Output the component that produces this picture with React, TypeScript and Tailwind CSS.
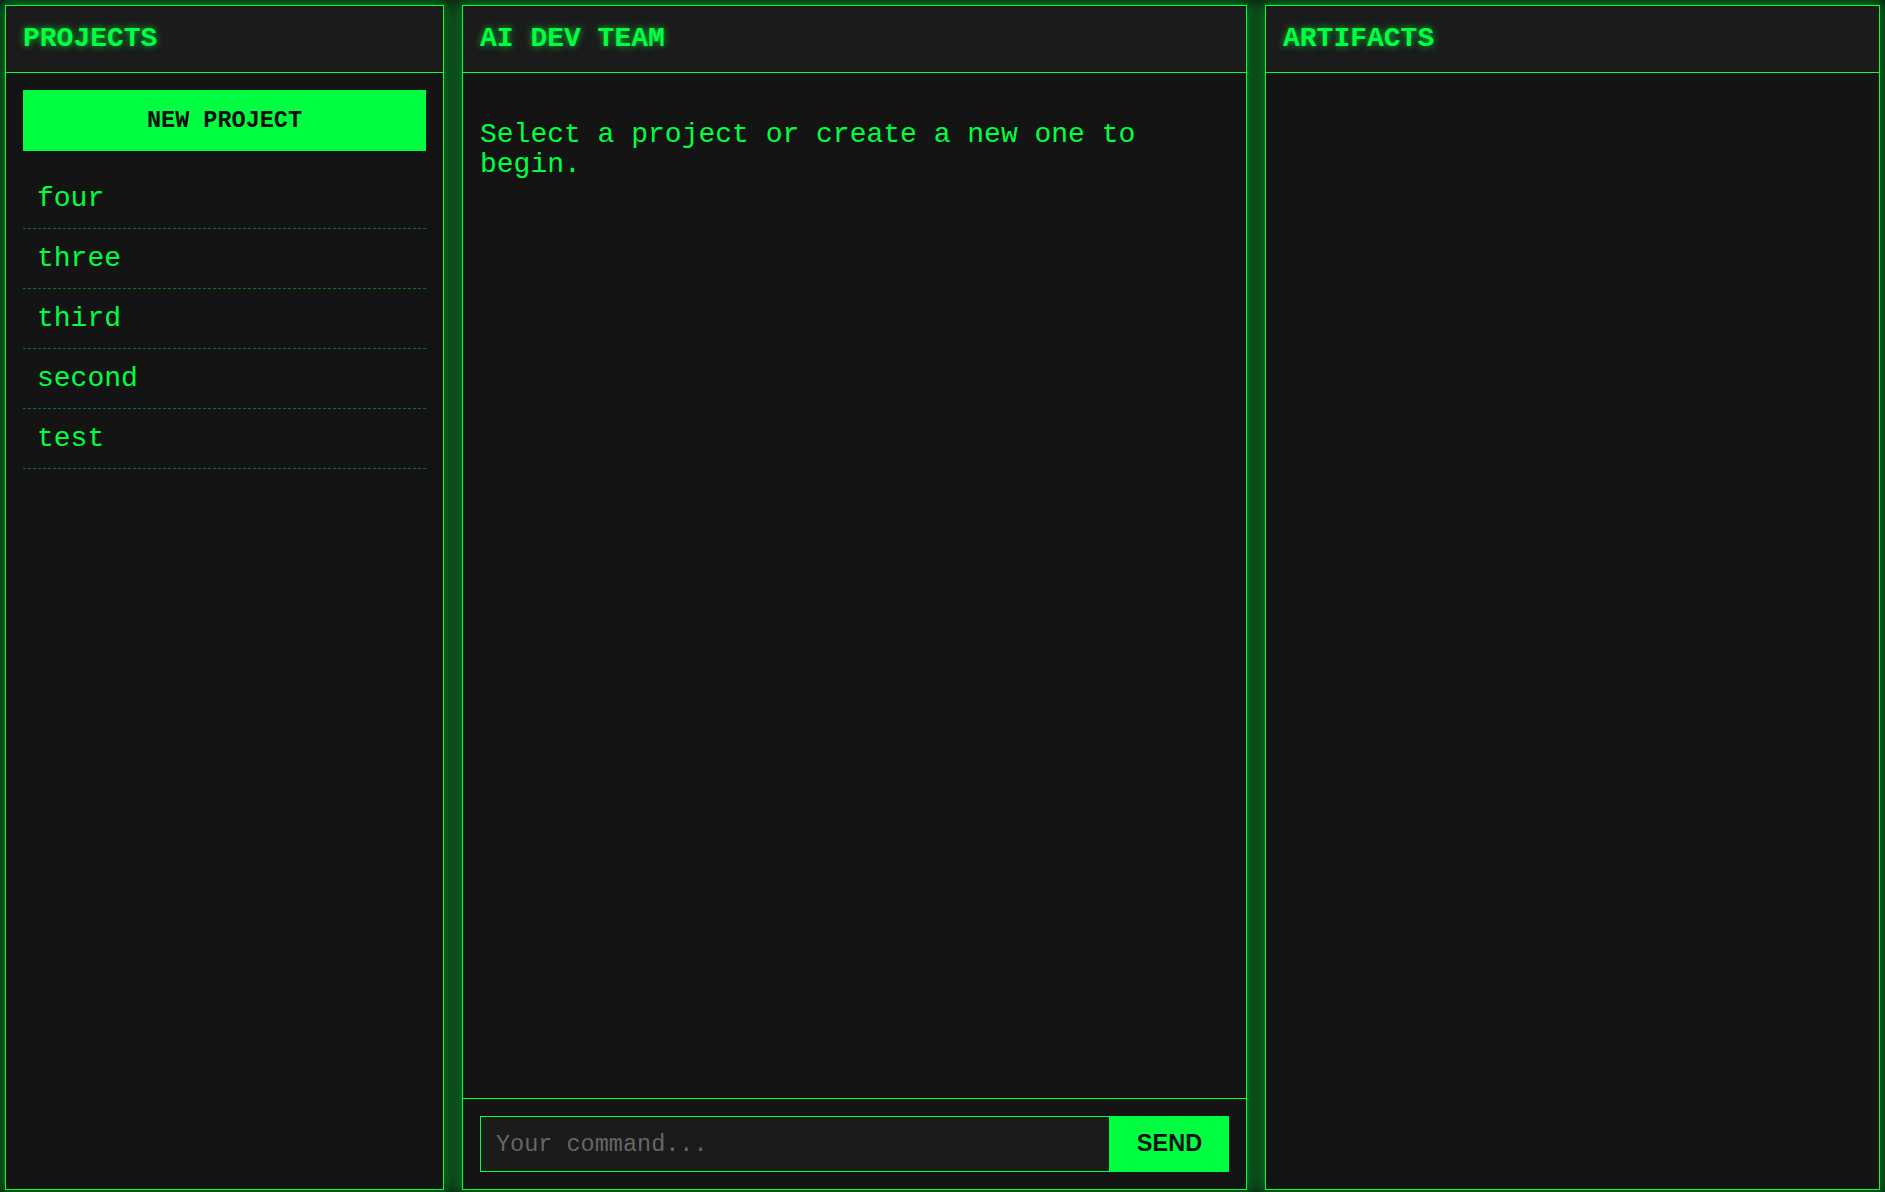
import { useState } from 'react';

const projects = ['four', 'three', 'third', 'second', 'test'];

const panel =
    'flex h-[1185px] flex-col border border-[#00ff41] bg-[#141414] shadow-[0_0_15px_5px_rgba(0,255,65,0.45)]';

function PanelHeader({ title }: { title: string }) {
    return (
        <div className="border-b border-[#00ff41] bg-[#1b1b1b] px-[17px] pt-[17px] pb-[18px]">
            <h2 className="text-[28px] leading-[normal] font-bold text-[#00ff41] [text-shadow:0_0_7px_rgba(0,255,65,0.75)]">
                {title}
            </h2>
        </div>
    );
}

export default function App() {
    const [command, setCommand] = useState('');

    return (
        <div className="grid h-screen grid-cols-[439px_785px_1fr] items-start gap-[18px] bg-[#0d0d0d] px-[5px] pt-[5px] font-['Liberation_Mono',monospace] text-[#00ff41]">
            {/* projects sidebar */}
            <aside className={panel}>
                <PanelHeader title="PROJECTS" />
                <div className="flex flex-col p-[17px]">
                    <button
                        type="button"
                        className="mb-[18px] bg-[#00ff41] py-[17px] text-[23.5px] leading-[normal] font-bold text-[#0d0d0d]"
                    >
                        NEW PROJECT
                    </button>
                    <ul>
                        {projects.map((name) => (
                            <li
                                key={name}
                                className="border-b border-dashed border-[#00ff41]/40 px-[14px] py-[14px] text-[28px] leading-[normal]"
                            >
                                {name}
                            </li>
                        ))}
                    </ul>
                </div>
            </aside>

            {/* chat */}
            <main className={panel}>
                <PanelHeader title="AI DEV TEAM" />
                <div className="flex-1 p-[17px]">
                    <p className="mt-[30px] text-[28px] leading-[30px]">
                        Select a project or create a new one to begin.
                    </p>
                </div>
                <div className="flex border-t border-[#00ff41] p-[17px]">
                    <input
                        value={command}
                        onChange={(e) => setCommand(e.target.value)}
                        placeholder="Your command..."
                        className="h-[56px] flex-1 border border-[#00ff41] bg-[#1b1b1b] px-[15px] text-[23.5px] text-[#00ff41] outline-none placeholder:text-[#666]"
                    />
                    <button
                        type="button"
                        className="h-[56px] w-[119px] bg-[#00ff41] font-['Liberation_Sans',Arial,sans-serif] text-[23.5px] font-bold text-[#111]"
                    >
                        SEND
                    </button>
                </div>
            </main>

            {/* artifacts */}
            <section className={panel}>
                <PanelHeader title="ARTIFACTS" />
                <div className="flex-1" />
            </section>
        </div>
    );
}
